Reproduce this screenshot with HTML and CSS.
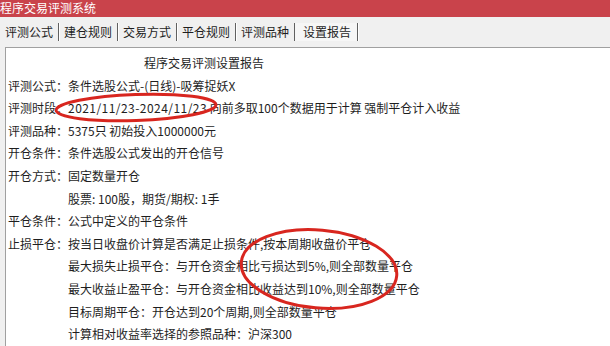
FILE: index.html
```html
<!DOCTYPE html>
<html lang="zh-CN">
<head>
<meta charset="utf-8">
<title>程序交易评测系统</title>
<link rel="stylesheet" href="styles.css">
</head>
<body>
<div class="app">
  <header class="titlebar">程序交易评测系统</header>
  <nav class="tabs">
    <span class="tab">评测公式</span>
    <span class="tab">建仓规则</span>
    <span class="tab">交易方式</span>
    <span class="tab">平仓规则</span>
    <span class="tab">评测品种</span>
    <span class="tab active">设置报告</span>
  </nav>
  <main class="panel">
    <div class="report-title">程序交易评测设置报告</div>
    <div class="line">评测公式：条件选股公式-(日线)-吸筹捉妖X</div>
    <div class="line">评测时段：<span class="date">2021/11/23-2024/11/23</span> 向前多取100个数据用于计算 强制平仓计入收益</div>
    <div class="line">评测品种：5375只 初始投入1000000元</div>
    <div class="line">开仓条件：条件选股公式发出的开仓信号</div>
    <div class="line">开仓方式：固定数量开仓</div>
    <div class="line indent">股票: 100股，期货/期权: 1手</div>
    <div class="line">平仓条件：公式中定义的平仓条件</div>
    <div class="line">止损平仓：按当日收盘价计算是否满足止损条件,按本周期收盘价平仓</div>
    <div class="line indent">最大损失止损平仓：与开仓资金相比亏损达到5%,则全部数量平仓</div>
    <div class="line indent">最大收益止盈平仓：与开仓资金相比收益达到10%,则全部数量平仓</div>
    <div class="line indent">目标周期平仓：开仓达到20个周期,则全部数量平仓</div>
    <div class="line indent">计算相对收益率选择的参照品种：沪深300</div>
  </main>
  <svg class="marks" width="610" height="346" viewBox="0 0 610 346">
    <ellipse cx="136" cy="107.5" rx="80" ry="13" transform="rotate(-2 136 107.5)" />
    <ellipse cx="319" cy="269" rx="78" ry="39" transform="rotate(5 319 269)" />
  </svg>
</div>
</body>
</html>
```
FILE: styles.css
```css
html, body {
  margin: 0;
  padding: 0;
  background: #ffffff;
}
body {
  font-family: "Noto Sans CJK SC", "Microsoft YaHei", sans-serif;
  font-size: 12px;
  color: #1e1e1e;
  width: 610px;
  height: 346px;
  overflow: hidden;
}
.app {
  position: relative;
  width: 610px;
  height: 346px;
  display: flex;
  flex-direction: column;
  background: #f0f0f0;
}
.titlebar {
  height: 17px;
  line-height: 16px;
  background: #c9434b;
  color: #ffffff;
  padding-left: 0;
  flex: none;
}
.tabs {
  height: 30px;
  display: flex;
  align-items: center;
  flex: none;
  background: #f0f0f0;
}
.tab {
  padding: 0 5px;
  height: 18px;
  line-height: 18px;
  border-right: 1px solid #606060;
  box-shadow: 1px 0 0 #ffffff;
}
.tab.active {
  padding: 0 6px 0 8px;
  background: #f6f6f6;
}
.panel {
  flex: 1;
  margin-left: 5px;
  background: #ffffff;
  border-top: 1px solid #a0a0a0;
  border-left: 1px solid #a0a0a0;
  padding: 4px 0 0 2px;
  line-height: 22.6px;
  white-space: nowrap;
}
.report-title {
  margin-left: 136px;
}
.date {
  letter-spacing: 0.45px;
}
.indent {
  padding-left: 60px;
}
.marks {
  position: absolute;
  left: 0;
  top: 0;
  pointer-events: none;
}
.marks ellipse {
  fill: none;
  stroke: #d8261f;
  stroke-width: 3;
}
```
